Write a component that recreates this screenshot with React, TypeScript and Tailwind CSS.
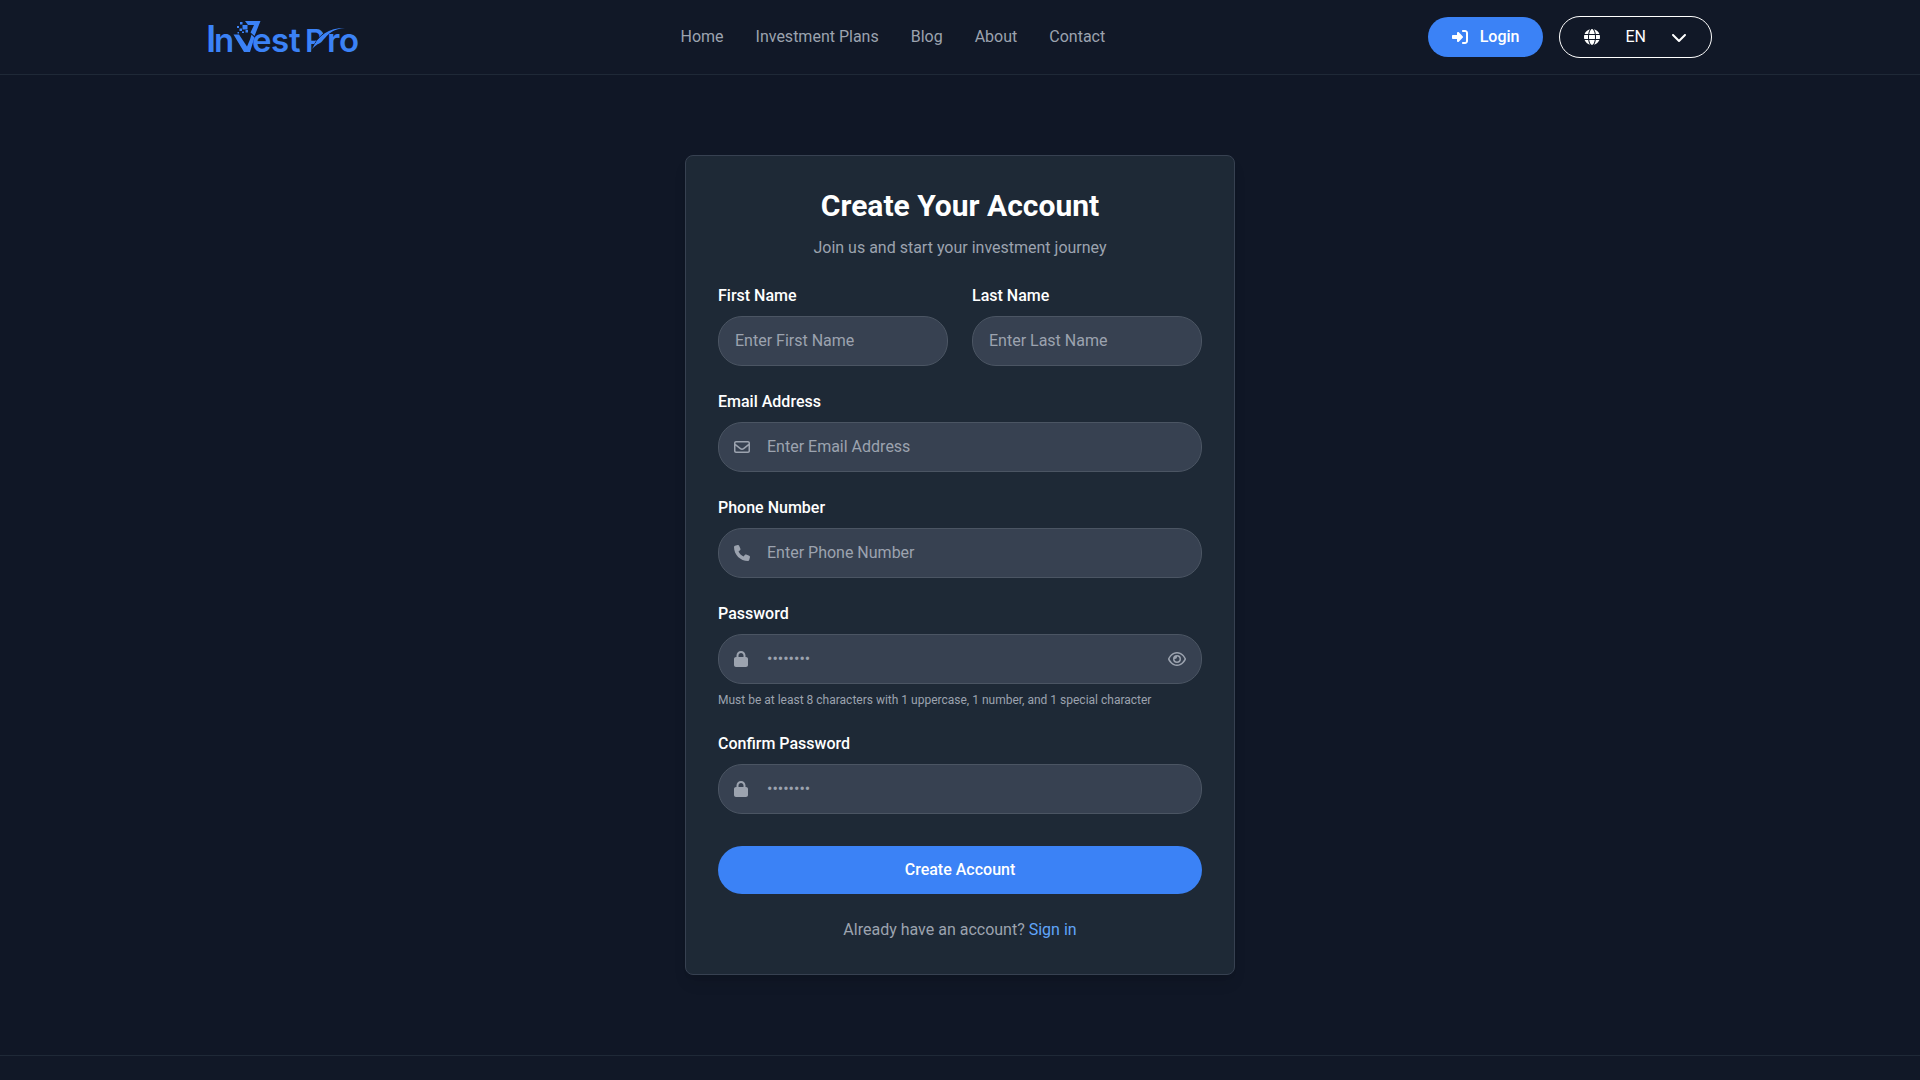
import { useState } from "react";
import type { InputHTMLAttributes, ReactNode } from "react";
import {
  FaChevronDown,
  FaGlobe,
  FaLock,
  FaPhone,
  FaRegEnvelope,
  FaRegEye,
  FaRegEyeSlash,
  FaRightToBracket,
} from "react-icons/fa6";

const links = ["Home", "Investment Plans", "Blog", "About", "Contact"];

function Logo() {
  return (
    <svg
      viewBox="-1 0 150 42"
      className="h-[42px] w-[150px] overflow-visible fill-[#3b82f6] font-['Inter',sans-serif] font-semibold"
      role="img"
      aria-label="InvestPro"
    >
      <text x="-3" y="36" fontSize="37">I</text>
      <text x="5" y="36" fontSize="33">n</text>
      <path d="M24.500 18.500h5.500l8 12 3-7 1.500-5 3 3L41 36h-6z" />
      <path d="M36 5h15.500L45.500 20l-4-3.500 3.500-7.500h-6z" />
      <path d="M31 6h2.500v2.500H31zM33.500 9h5v4.500h-5zM28 10h2v2h-2zM30.500 12.500h2.500V15h-2.500zM36.500 14h2.500v2.500h-2.500zM33 15.500h2V17h-2zM28.500 16h1.500v1.500h-1.500z" />
      <text x="43" y="36" fontSize="33">e</text>
      <text x="62" y="36" fontSize="33">s</text>
      <text x="80" y="36" fontSize="33">t</text>
      <text x="96" y="36" fontSize="31">P</text>
      <path
        d="M102.500 37c2-9 6-15 13-20"
        className="fill-none stroke-[#111827] stroke-1"
      />
      <path d="M103 33c7-14 16-21 33-21-11 1-16 5-20 10-4 4-8 6-13 11z" />
      <text x="118" y="36" fontSize="33">r</text>
      <text x="130" y="36" fontSize="33">o</text>
    </svg>
  );
}

function Header() {
  return (
    <header className="border-b border-[#1f2937] bg-[#111827]">
      <div className="mx-auto flex max-w-[1536px] items-center justify-between p-4">
        <a href="#">
          <Logo />
        </a>
        <nav className="flex gap-8 text-[#9ca3af]">
          {links.map((link) => (
            <a key={link} href="#" className="hover:text-white">
              {link}
            </a>
          ))}
        </nav>
        <div className="flex items-center gap-4">
          <button
            type="button"
            className="flex items-center gap-3 rounded-full bg-[#3b82f6] px-6 py-2 font-medium"
          >
            <FaRightToBracket className="size-4" />
            Login
          </button>
          <label className="flex items-center gap-[25px] rounded-full border border-white px-6 py-2">
            <FaGlobe className="size-4" />
            <select
              aria-label="Language"
              className="appearance-none bg-transparent outline-none [field-sizing:content]"
            >
              <option>EN</option>
            </select>
            <FaChevronDown className="size-4" />
          </label>
        </div>
      </div>
    </header>
  );
}

type FieldProps = InputHTMLAttributes<HTMLInputElement> & {
  id: string;
  label: string;
  icon?: ReactNode;
  action?: ReactNode;
  hint?: string;
};

function Field({ id, label, icon, action, hint, ...input }: FieldProps) {
  return (
    <div>
      <label htmlFor={id} className="mb-2 block font-medium">
        {label}
      </label>
      <div
        className={`flex items-center rounded-3xl border border-[#4b5563] bg-[#374151] text-[#9ca3af] focus-within:border-[#3b82f6] ${
          icon ? "px-[15px]" : "px-4"
        }`}
      >
        {icon && <span className="w-[33px] shrink-0">{icon}</span>}
        <input
          id={id}
          className="h-12 w-full min-w-0 bg-transparent pb-0.5 text-white outline-none placeholder:text-[#9ca3af]"
          {...input}
        />
        {action}
      </div>
      {hint && <p className="mt-2 text-xs text-[#9ca3af]">{hint}</p>}
    </div>
  );
}

function RegisterForm() {
  const [visible, setVisible] = useState(false);

  return (
    <form
      className="space-y-6"
      onSubmit={(e) => {
        e.preventDefault();
      }}
    >
      <div className="grid grid-cols-2 gap-6">
        <Field id="first-name" label="First Name" placeholder="Enter First Name" />
        <Field id="last-name" label="Last Name" placeholder="Enter Last Name" />
      </div>
      <Field
        id="email"
        label="Email Address"
        type="email"
        placeholder="Enter Email Address"
        icon={<FaRegEnvelope className="size-4" />}
      />
      <Field
        id="phone"
        label="Phone Number"
        type="tel"
        placeholder="Enter Phone Number"
        icon={<FaPhone className="size-4" />}
      />
      <Field
        id="password"
        label="Password"
        type={visible ? "text" : "password"}
        placeholder="••••••••"
        icon={<FaLock className="h-4 w-[14px]" />}
        hint="Must be at least 8 characters with 1 uppercase, 1 number, and 1 special character"
        action={
          <button
            type="button"
            aria-label="Show password"
            onClick={() => setVisible(!visible)}
          >
            {visible
              ? <FaRegEyeSlash className="h-4 w-[18px]" />
              : <FaRegEye className="h-4 w-[18px]" />}
          </button>
        }
      />
      <Field
        id="confirm-password"
        label="Confirm Password"
        type="password"
        placeholder="••••••••"
        icon={<FaLock className="h-4 w-[14px]" />}
      />
      <button
        type="submit"
        className="mt-2 w-full rounded-3xl bg-[#3b82f6] py-3 font-medium hover:bg-[#2563eb]"
      >
        Create Account
      </button>
    </form>
  );
}

export default function App() {
  return (
    <div className="flex min-h-screen flex-col bg-[#101726] font-['Roboto',sans-serif] text-base text-white">
      <Header />
      <main className="px-4 py-20">
        <section className="mx-auto max-w-[550px] rounded-lg border border-[#374151] bg-[#1e2936] p-8 shadow-lg">
          <div className="mb-6 text-center">
            <h1 className="mb-3 text-3xl font-bold">Create Your Account</h1>
            <p className="text-[#9ca3af]">Join us and start your investment journey</p>
          </div>
          <RegisterForm />
          <p className="mt-6 text-center text-[#9ca3af]">
            Already have an account?{" "}
            <a href="#" className="text-[#60a5fa]">
              Sign in
            </a>
          </p>
        </section>
      </main>
      <footer className="grow border-t border-[#1f2937] bg-[#111827]" />
    </div>
  );
}
